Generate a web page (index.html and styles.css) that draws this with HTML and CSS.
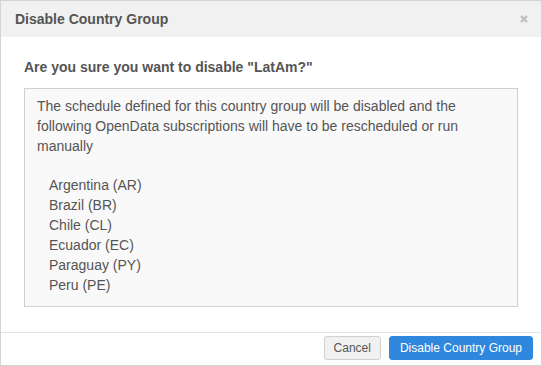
FILE: index.html
```html
<!DOCTYPE html>
<html lang="en">
<head>
  <meta charset="UTF-8" />
  <title>Disable Country Group</title>
  <link rel="stylesheet" href="styles.css">
</head>
<body>
  <div class="modal">
    <div class="modal-header">
      <span class="modal-title">Disable Country Group</span>
      <svg class="modal-close" width="8" height="8" viewBox="0 0 8 8">
        <path d="M1 1L7 7M7 1L1 7" stroke="#bdbdbd" stroke-width="2.2" />
      </svg>
    </div>

    <div class="modal-body">
      <div class="question">Are you sure you want to disable "LatAm?"</div>
      <div class="notice">
        <p>The schedule defined for this country group will be disabled and the following OpenData subscriptions will have to be rescheduled or run manually</p>
        <ul class="country-list">
          <li>Argentina (AR)</li>
          <li>Brazil (BR)</li>
          <li>Chile (CL)</li>
          <li>Ecuador (EC)</li>
          <li>Paraguay (PY)</li>
          <li>Peru (PE)</li>
        </ul>
      </div>
    </div>

    <div class="modal-footer">
      <button class="btn">Cancel</button>
      <button class="btn btn-primary">Disable Country Group</button>
    </div>
  </div>
</body>
</html>
```

FILE: styles.css
```css
body {
  margin: 0;
  font-family: "Liberation Sans", Arial, sans-serif;
  color: #555;
  background: #fff;
}

.modal {
  width: 542px;
  height: 366px;
  box-sizing: border-box;
  border: 1px solid #d4d4d4;
  display: flex;
  flex-direction: column;
}

.modal-header {
  height: 36px;
  background: #f1f1f1;
  display: flex;
  align-items: center;
  justify-content: space-between;
  padding: 0 13px 0 14px;
}

.modal-title {
  font-size: 14px;
  font-weight: bold;
  color: #555;
}

.modal-close {
  display: block;
}

.modal-body {
  flex: 1;
  padding: 20px 23px 0 23px;
}

.question {
  font-size: 14px;
  font-weight: bold;
  line-height: 20px;
  margin-bottom: 11px;
}

.notice {
  background: #f9f9f9;
  border: 1px solid #d0d0d0;
  padding: 7px 12px 11px 12px;
  font-size: 14px;
  line-height: 20px;
}

.notice p {
  margin: 0 0 19px 0;
}

.country-list {
  list-style: none;
  margin: 0;
  padding: 0 0 0 12px;
}

.modal-footer {
  border-top: 1px solid #e3e3e3;
  display: flex;
  justify-content: flex-end;
  gap: 8px;
  padding: 3px 8px 5px 0;
}

.btn {
  height: 24px;
  padding: 0 9px;
  font-family: "Liberation Sans", Arial, sans-serif;
  font-size: 12px;
  color: #555;
  background: #f1f1f1;
  border: 1px solid #d0d0d0;
  border-radius: 3px;
}

.btn-primary {
  padding: 0 10px;
  background: #2f88de;
  border-color: #2f88de;
  color: #fff;
}
```
